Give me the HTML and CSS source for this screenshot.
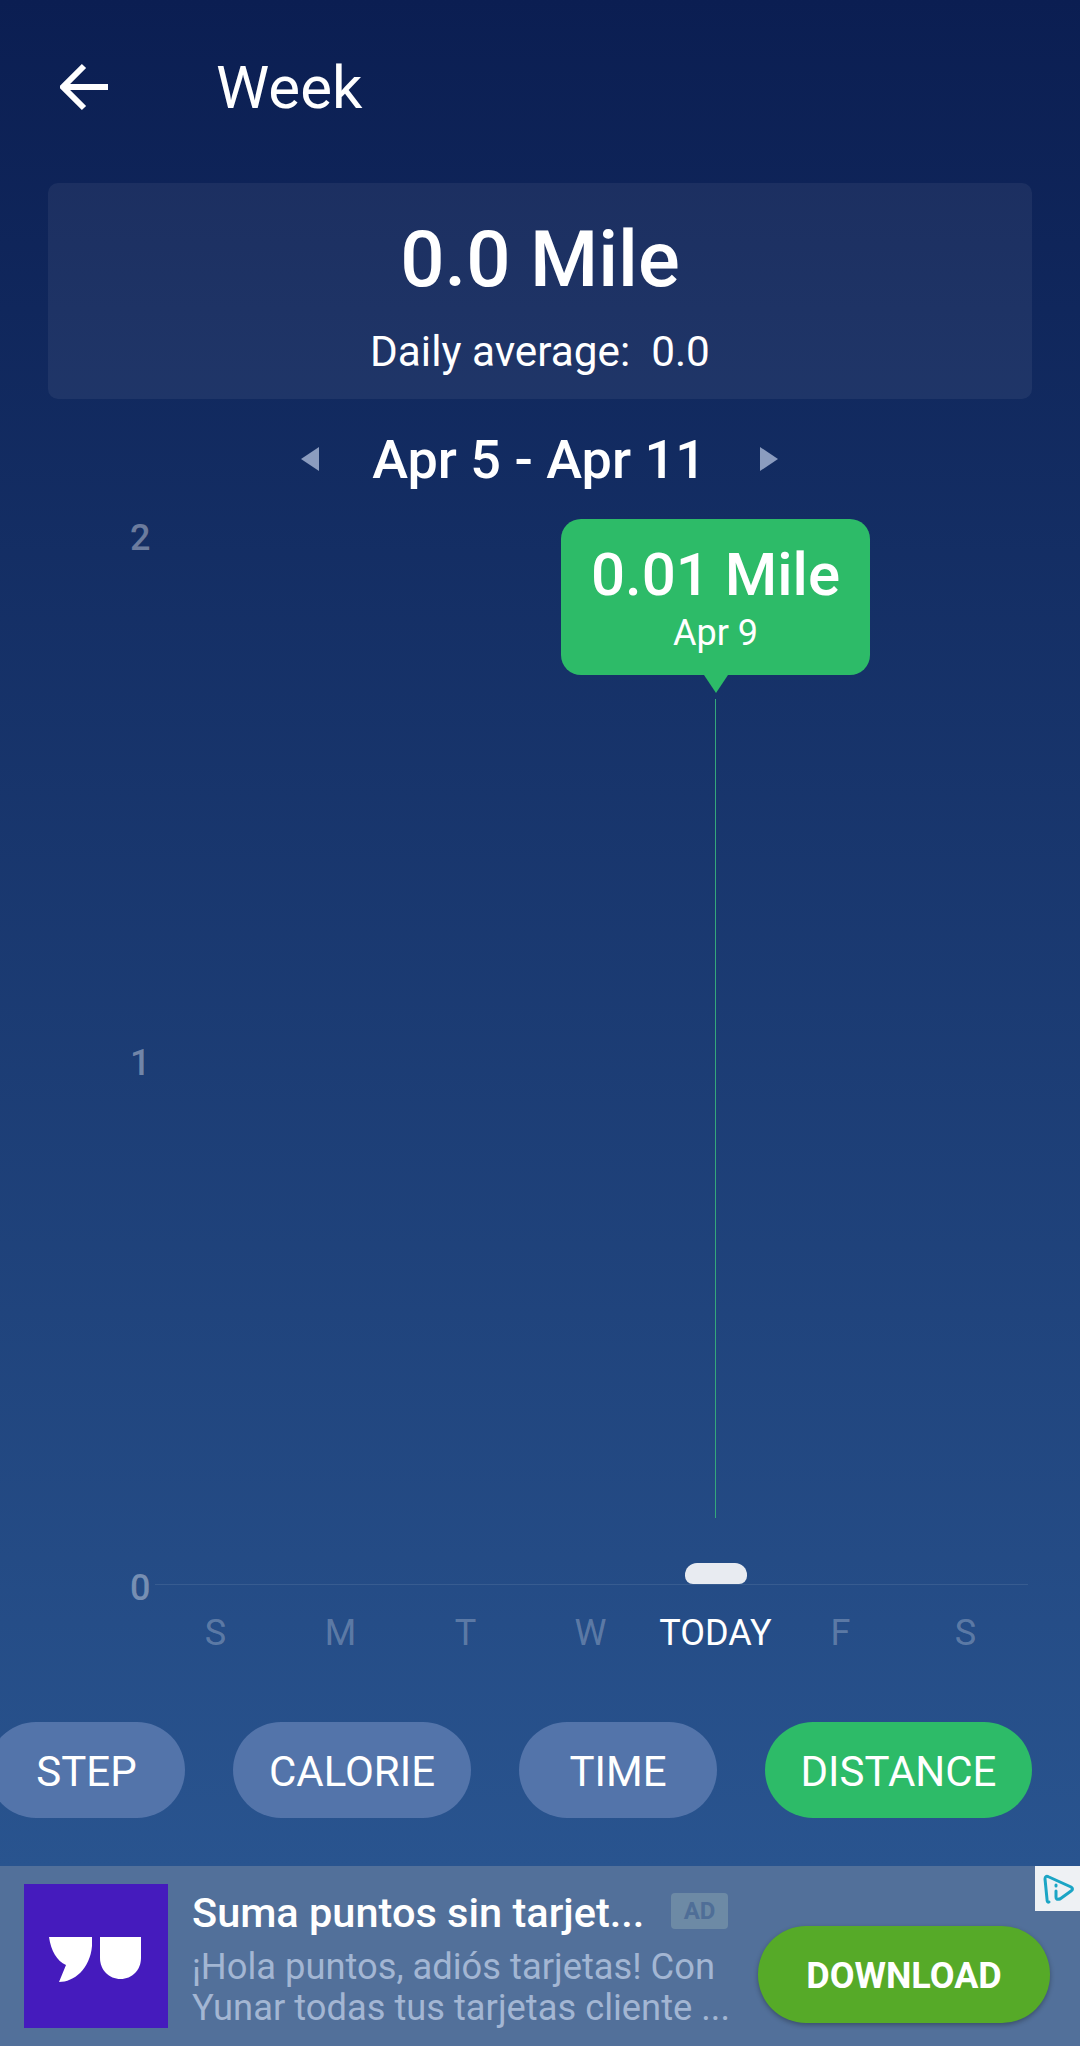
FILE: index.html
```html
<!DOCTYPE html>
<html lang="en">
<head>
  <meta charset="UTF-8">
  <meta name="viewport" content="width=device-width, initial-scale=1.0">
  <title>Week</title>
  <link rel="stylesheet" href="styles.css">
</head>
<body>
  <div class="screen">
    <header class="topbar">
      <svg class="back" width="50" height="48" viewBox="0 0 50 48">
        <path d="M48 24H4M24 3 3 24l21 21" fill="none" stroke="#fff" stroke-width="6"/>
      </svg>
      <h1>Week</h1>
    </header>

    <section class="summary">
      <div class="total">0.0 Mile</div>
      <div class="average">Daily average:&nbsp; 0.0</div>
    </section>

    <div class="range">
      <span class="arrow arrow-left"></span>
      <span class="range-text">Apr 5 - Apr 11</span>
      <span class="arrow arrow-right"></span>
    </div>

    <section class="chart">
      <div class="y-axis">
        <span>2</span>
        <span>1</span>
        <span>0</span>
      </div>
      <div class="plot">
        <div class="tooltip">
          <div class="tooltip-value">0.01 Mile</div>
          <div class="tooltip-date">Apr 9</div>
        </div>
        <div class="guide"></div>
        <div class="bar"></div>
      </div>
      <div class="days">
        <span>S</span>
        <span>M</span>
        <span>T</span>
        <span>W</span>
        <span class="today">TODAY</span>
        <span>F</span>
        <span>S</span>
      </div>
    </section>

    <nav class="tabs">
      <a class="tab">STEP</a>
      <a class="tab tab-calorie">CALORIE</a>
      <a class="tab tab-time">TIME</a>
      <a class="tab tab-active">DISTANCE</a>
    </nav>

    <aside class="ad">
      <div class="ad-logo">
        <svg width="92" height="46" viewBox="0 0 92 46">
          <path d="M0 0h43v9C41 32 25 45 10 45l7-17C8 24 2 14 0 0Z" fill="#fff"/>
          <path d="M51 0h41v21c0 12-9 21-20.500 21S51 33 51 21Z" fill="#fff"/>
        </svg>
      </div>
      <div class="ad-text">
        <div class="ad-title-row">
          <span class="ad-title">Suma puntos sin tarjet...</span>
          <span class="ad-badge">AD</span>
        </div>
        <div class="ad-desc">¡Hola puntos, adiós tarjetas! Con<br>Yunar todas tus tarjetas cliente ...</div>
      </div>
      <a class="ad-button">DOWNLOAD</a>
      <div class="ad-choices">
        <svg width="45" height="45" viewBox="0 0 45 45">
          <path d="M14 36Q12 37 12 33L10 13Q10 9 14 11L36 21Q39 23 36 25L25 33" fill="none" stroke="#1ba5c5" stroke-width="3" stroke-linecap="round"/>
          <path d="M21 25v6Q21 34 24 33M21 19v1" fill="none" stroke="#1ba5c5" stroke-width="3" stroke-linecap="round"/>
        </svg>
      </div>
    </aside>
  </div>
</body>
</html>
```

FILE: styles.css
```css
* {
  box-sizing: border-box;
}
html, body {
  margin: 0;
  padding: 0;
}
body {
  font-family: Roboto, "Noto Sans", sans-serif;
  color: #fff;
}
.screen {
  width: 1080px;
  height: 2046px;
  overflow: hidden;
  display: flex;
  flex-direction: column;
  background: linear-gradient(#0b1e52, #29548f 1866px);
}

.topbar {
  height: 183px;
  padding: 64px 0 0 60px;
  display: flex;
  align-items: flex-start;
}
.back {
  margin-top: -1px;
}
.topbar h1 {
  margin: -11px 0 0 106px;
  font-size: 60px;
  line-height: 70px;
  font-weight: 400;
}

.summary {
  margin: 0 48px;
  height: 216px;
  padding-top: 30px;
  background: rgba(255, 255, 255, 0.06);
  border-radius: 10px;
  text-align: center;
}
.total {
  font-size: 78px;
  line-height: 94px;
  font-weight: 500;
}
.average {
  margin-top: 20px;
  font-size: 42.3px;
  line-height: 50px;
}

.range {
  height: 120px;
  padding-right: 2px;
  display: flex;
  align-items: center;
  justify-content: center;
}
.range-text {
  width: 441px;
  text-align: center;
  font-size: 54px;
  font-weight: 500;
}
.arrow {
  width: 0;
  height: 0;
  border-top: 12px solid transparent;
  border-bottom: 12px solid transparent;
}
.arrow-left {
  border-right: 18px solid #8b9cbf;
}
.arrow-right {
  border-left: 18px solid #8b9cbf;
}

.chart {
  position: relative;
  height: 1203px;
}
.y-axis {
  position: absolute;
  left: 130px;
  top: -1px;
  height: 1090px;
  display: flex;
  flex-direction: column;
  justify-content: space-between;
  font-size: 36px;
  line-height: 40px;
  font-weight: 500;
  color: rgba(255, 255, 255, 0.38);
}
.plot {
  position: absolute;
  left: 155px;
  top: 0;
  width: 873px;
  height: 1066px;
  border-bottom: 1px solid rgba(255, 255, 255, 0.09);
}
.tooltip {
  position: absolute;
  left: 406px;
  top: 0;
  width: 309px;
  height: 156px;
  padding-top: 21px;
  background: #2dbb68;
  border-radius: 20px;
  text-align: center;
}
.tooltip::after {
  content: "";
  position: absolute;
  left: 143px;
  top: 156px;
  border-left: 12px solid transparent;
  border-right: 12px solid transparent;
  border-top: 18px solid #2dbb68;
}
.tooltip-value {
  font-size: 60px;
  line-height: 70px;
  font-weight: 500;
}
.tooltip-date {
  margin-top: 1px;
  font-size: 36px;
  line-height: 44px;
}
.guide {
  position: absolute;
  left: 560px;
  top: 180px;
  width: 1px;
  height: 819px;
  background: #35a77b;
}
.bar {
  position: absolute;
  left: 530px;
  bottom: 0;
  width: 62px;
  height: 21px;
  background: #e8ebf1;
  border-radius: 12px 12px 8px 8px;
}
.days {
  position: absolute;
  left: 153px;
  top: 1094px;
  width: 875px;
  display: grid;
  grid-template-columns: repeat(7, 125px);
  text-align: center;
  font-size: 36px;
  line-height: 40px;
  color: rgba(255, 255, 255, 0.27);
}
.today {
  color: #fff;
}

.tabs {
  height: 144px;
  padding-right: 48px;
  display: flex;
  justify-content: flex-end;
  gap: 48px;
}
.tab {
  width: 197px;
  height: 96px;
  padding-top: 2px;
  flex: none;
  display: flex;
  align-items: center;
  justify-content: center;
  background: #5374aa;
  border-radius: 48px;
  font-size: 42px;
}
.tab-calorie {
  width: 238px;
}
.tab-time {
  width: 198px;
}
.tab-active {
  width: 267px;
  background: #2dbb68;
}

.ad {
  position: relative;
  height: 180px;
  padding: 18px 30px 18px 24px;
  display: flex;
  background: #52709a;
}
.ad-logo {
  width: 144px;
  height: 144px;
  flex: none;
  padding: 53px 0 0 25px;
  background: #451bbd;
}
.ad-logo svg {
  display: block;
}
.ad-text {
  width: 560px;
  flex: none;
  padding-left: 24px;
}
.ad-title-row {
  height: 56px;
  display: flex;
  align-items: center;
  justify-content: space-between;
}
.ad-title {
  font-size: 41.5px;
  font-weight: 500;
}
.ad-badge {
  width: 57px;
  height: 36px;
  margin-top: -2px;
  background: #6d8aa5;
  border-radius: 4px;
  color: #4f6e97;
  font-size: 24px;
  font-weight: 700;
  line-height: 36px;
  text-align: center;
}
.ad-desc {
  margin-top: 6px;
  color: #a3b6d3;
  font-size: 36.3px;
  line-height: 41px;
  white-space: nowrap;
}
.ad-button {
  width: 292px;
  height: 97px;
  padding-top: 3px;
  margin: 42px 0 0 30px;
  flex: none;
  display: flex;
  align-items: center;
  justify-content: center;
  background: #56aa28;
  border-radius: 48px;
  box-shadow: 0 2px 5px rgba(0, 0, 0, 0.3);
  font-size: 36px;
  font-weight: 700;
}
.ad-choices {
  position: absolute;
  right: 0;
  top: 0;
  width: 45px;
  height: 45px;
  background: #eef1f4;
}
.ad-choices svg {
  display: block;
}
```
